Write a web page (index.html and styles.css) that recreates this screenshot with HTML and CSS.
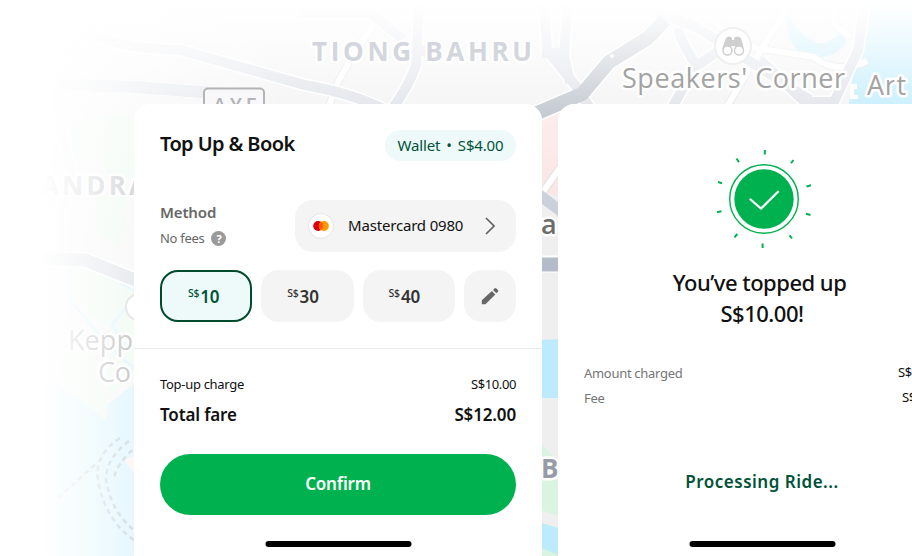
FILE: index.html
```html
<!DOCTYPE html>
<html lang="en">
<head>
<meta charset="utf-8">
<title>Top Up &amp; Book</title>
<link rel="stylesheet" href="styles.css">
</head>
<body>
<div class="stage">
  <svg class="map" width="912" height="556" viewBox="0 0 912 556" aria-hidden="true">
    <defs>
      <linearGradient id="fadeTop" x1="0" y1="0" x2="0" y2="1">
        <stop offset="0" stop-color="#fff"/><stop offset=".06" stop-color="#fff" stop-opacity=".95"/>
        <stop offset=".25" stop-color="#fff" stop-opacity=".7"/><stop offset=".45" stop-color="#fff" stop-opacity=".4"/><stop offset=".7" stop-color="#fff" stop-opacity=".2"/><stop offset="1" stop-color="#fff" stop-opacity="0"/>
      </linearGradient>
      <linearGradient id="fadeLeft" x1="0" y1="0" x2="1" y2="0">
        <stop offset="0" stop-color="#fff"/><stop offset=".14" stop-color="#fff"/>
        <stop offset=".3" stop-color="#fff" stop-opacity=".84"/>
        <stop offset=".47" stop-color="#fff" stop-opacity=".62"/><stop offset="1" stop-color="#fff" stop-opacity="0"/>
      </linearGradient>
    </defs>
    <rect width="912" height="556" fill="#efefef"/>
    <!-- water and parks -->
    <path d="M0 370L50 379L66 389L106 420L108 404L145 375V556H0Z" fill="#bdebfb"/>
    <path d="M55 360L66 389L104 419L107 404L92 350L70 352ZM70 270L90 268L134 289V375L106 399L112 330L72 302ZM97 195H125L127 228L117 248L95 230ZM66 125L128 113L145 140V180L108 178L102 152L76 170Z" fill="#dff5e4"/>
    <path d="M70 268V300L112 350L134 368M134 297L112 325L128 350M120 283L134 291" fill="none" stroke="#bdebfb" stroke-width="3"/>
    <path d="M866 0H912V110H848L853 75L863 48Z" fill="#a8e6fb"/>
    <path d="M787 10C792 28 815 48 826 43L842 33L846 42C835 63 805 60 793 45Q785 30 787 10Z" fill="#a8e6fb"/>
    <path d="M850 84H857V89H854V95H858V99H850Z" fill="#fff"/>
    <path d="M538 340L562 339V398H538ZM538 522L562 529V556H538Z" fill="#bdebfb"/>
    <path d="M538 440L562 466V517L538 509ZM541 548L562 556H541Z" fill="#d9f4e0"/>
    <path d="M538 112L562 109V198L538 190Z" fill="#f9e3e1"/>
    <path d="M125 460L145 450V480L131 470Z" fill="#f9e8e6"/>
    <path d="M120 438Q94 455 98 480Q105 520 134 540M129 441Q106 458 106 480Q112 513 134 530M139 444Q115 464 114 480M58 498L98 462" fill="none" stroke="#8fa8b6" stroke-width="2.500" stroke-dasharray="5 4"/>
    <!-- minor roads -->
    <g fill="none">
      <path d="M373 25Q365 39 357 48L343 73Q335 86 328 110M715 24L755 48L814 57Q834 75 867 61M725 110L752 64M756 58L786 10M832 8L835 25L851 37M540 196L562 165" stroke="#d8dbe0" stroke-width="8"/>
      <path d="M373 25Q365 39 357 48L343 73Q335 86 328 110M715 24L755 48L814 57Q834 75 867 61M725 110L752 64M756 58L786 10M832 8L835 25L851 37M540 196L562 165" stroke="#fff" stroke-width="6"/>
    </g>
    <!-- major roads -->
    <g fill="none" stroke="#fff">
      <path d="M50 84L135 87L240 95M112 8L90 28Q62 50 53 78Q58 120 73 180L60 210V252M90 32Q120 49 180 50Q230 64 305 85Q355 94 385 110" stroke-width="13"/>
      <path d="M0 257L85 260L140 282" stroke-width="16"/>
      <path d="M419 0L416 65Q410 84 393 108M300 13L370 13L403 39M544 0L547 50L575 85L590 108M568 0L564 55L570 83" stroke-width="13"/>
      <path d="M535 114L582 94L609 62L648 38L665 20" stroke-width="17"/>
      <path d="M658 12L698 28L810 100M678 28Q680 40 696 65L672 108M698 65L720 50M760 60L805 102H834L858 50L865 0" stroke-width="13"/>
      <path d="M535 264H565" stroke-width="17"/>
    </g>
    <g fill="none" stroke="#d3d7e0">
      <path d="M50 84L135 87L240 95" stroke-width="12" stroke="#cbd0d9"/>
      <path d="M112 8L90 28Q62 50 53 78Q58 120 73 180L60 210V252" stroke="#e7e8ec" stroke-width="10"/>
      <path d="M90 32Q120 49 180 50Q230 64 305 85Q355 94 385 110" stroke-width="10"/>
      <path d="M419 0L416 65Q410 84 393 108M300 13L370 13L403 39M544 0L547 50L575 85L590 108M568 0L564 55L570 83M416 51H426M542 53H568" stroke-width="10"/>
      <path d="M658 12L698 28L810 100M678 28Q680 40 696 65L672 108M698 65L720 50M760 60L805 102H834L858 50L865 0" stroke-width="10"/>
      <path d="M538 194L562 212" stroke-width="11" stroke="#c5ccd8"/>
      <path d="M0 257L85 260L140 282" stroke-width="13" stroke="#c3c8d2"/>
      <path d="M535 114L582 94L609 62L648 38L665 20" stroke-width="14" stroke="#a4adb9"/>
      <path d="M535 264.500H565" stroke-width="14" stroke="#b5bcc9"/>
    </g>
    <circle cx="612" cy="56" r="2" fill="#fff"/>
    <circle cx="139" cy="307" r="13" fill="#fff" stroke="#bbb" stroke-width="2"/>
    <rect width="912" height="240" fill="url(#fadeTop)"/>
    <g class="map-labels">
      <text class="district faint" x="312" y="61" textLength="220">TIONG BAHRU</text>
      <text class="district" x="41" y="195" textLength="106">ANDRA</text>
      <text class="district" x="541" y="478">B</text>
      <text class="place soft" x="622" y="88" textLength="223">Speakers' Corner</text>
      <text class="place soft" x="867" y="95" textLength="39">Art</text>
      <text class="place" x="68" y="350" textLength="65">Kepp</text>
      <text class="place" x="98" y="382" textLength="33">Co</text>
      <text class="place strong" x="541" y="234">a</text>
    </g>
    <circle cx="733" cy="46" r="18" fill="#fff" stroke="#f0f0f0" stroke-width="2"/>
    <path d="M726 38Q729 35 732 38V40H734V38Q737 35 741 38L744 49H735V46H731V49H722Z" fill="#cfcfcf"/>
    <g fill="#fff" stroke="#cfcfcf" stroke-width="1.500"><circle cx="727.500" cy="50.500" r="4.500"/><circle cx="739" cy="50.500" r="4.500"/></g>
    <rect width="290" height="556" fill="url(#fadeLeft)"/>
    <g class="map-labels">
      <rect x="204" y="88.500" width="60" height="30" rx="4" fill="#f8f8fa" stroke="#b4b4b4" stroke-width="2"/>
      <text class="shield" x="213" y="112" textLength="44">AYE</text>
    </g>
  </svg>

  <main class="cards">
    <section class="card">
      <header class="card-head">
        <h1 class="title">Top Up &amp; Book</h1>
        <span class="wallet"><span>Wallet</span><span>•</span><span>S$4.00</span></span>
      </header>
      <div class="method">
        <div class="method-text">
          <div class="method-name">Method</div>
          <div class="fees"><span>No fees</span><span class="help">?</span></div>
        </div>
        <div class="method-box">
          <svg class="brand" width="26" height="26" viewBox="0 0 26 26"><circle cx="13" cy="13" r="12.500" fill="#fff" stroke="#e4e4e4"/><circle cx="10.200" cy="13" r="5" fill="#d9000d"/><circle cx="15.800" cy="13" r="5" fill="#ff9800"/><path d="M13 8.860A5 5 0 0 1 13 17.140A5 5 0 0 1 13 8.860Z" fill="#ff5a00"/></svg>
          <span class="brand-name">Mastercard 0980</span>
          <svg class="chevron" width="10" height="18" viewBox="0 0 10 18"><path d="M1 1L9 9L1 17" fill="none" stroke="#606060" stroke-width="1.600"/></svg>
        </div>
      </div>
      <div class="chips">
        <div class="chip chip-on"><sup>S$</sup>10</div>
        <div class="chip"><sup>S$</sup>30</div>
        <div class="chip"><sup>S$</sup>40</div>
        <div class="chip chip-edit"><svg width="18" height="18" viewBox="0 0 18 18" fill="#666"><path d="M.8 17.200V13.200L10.900 4.100L14.300 7.400L4.500 17.200Z"/><path d="M12 3L13.700 1.300Q14.500.700 15.300 1.400L17 3Q17.500 3.900 17 4.500L15.400 6.300Z"/></svg></div>
      </div>
      <div class="divider"></div>
      <div class="row"><span class="row-name">Top-up charge</span><span class="row-value">S$10.00</span></div>
      <div class="row total"><span>Total fare</span><span>S$12.00</span></div>
      <div class="confirm">Confirm</div>
      <div class="home-bar"></div>
    </section>

    <section class="card card-done">
      <svg class="success" width="100" height="100" viewBox="0 0 100 100">
        <g fill="none" stroke="#00b14f">
          <circle cx="52" cy="50" r="34.300" stroke-width="1.400"/>
          <path d="M52.800 1V5.500M24.500 9.500L27 13.200M81.500 11L79 14.200M6 33L10 34.300M99 36.200L94.500 37.500M5 63.300L9.500 62.300M98.500 66L94 64.700M22.500 88.300L25.300 85M80 89.500L77.500 86.300M50.600 94.500V99" stroke-width="2"/>
        </g>
        <circle cx="52" cy="50" r="29.700" fill="#00b14f"/>
        <path d="M38.500 50.500L49 59.500L66 42.800" fill="none" stroke="#fff" stroke-width="2.300" stroke-linecap="round"/>
      </svg>
      <h2 class="done-title"><span class="done-line">You’ve topped up</span><span class="done-amount">S$10.00!</span></h2>
      <div class="receipt"><span>Amount charged</span><span class="row-value receipt-value">S$10.00</span></div>
      <div class="receipt"><span>Fee</span><span class="row-value receipt-fee">S$0.00</span></div>
      <div class="processing">Processing Ride...</div>
      <div class="home-bar done-bar"></div>
    </section>
  </main>
</div>
</body>
</html>
```
FILE: styles.css
```css
* { box-sizing: border-box; }
body {
  margin: 0;
  background: #fff;
  color: #111;
  font-family: "Noto Sans", "Open Sans", sans-serif;
}
.stage { position: relative; width: 912px; height: 556px; overflow: hidden; }
.map { position: absolute; inset: 0; display: block; }
.map-labels text { paint-order: stroke; stroke: #fff; stroke-width: 5px; stroke-linejoin: round; }
.map-labels .district { font: 700 26px "Open Sans", "Noto Sans", sans-serif; fill: #969ba6; }
.map-labels .place { font: 400 27px "Open Sans", "Noto Sans", sans-serif; fill: #6c6c6c; }
.map-labels .shield { font: 600 20px "Open Sans", "Noto Sans", sans-serif; fill: #b4b4b4; stroke-width: 0; }
.map-labels .faint { fill: #d3d6dc; }
.map-labels .soft { fill: #a3a3a3; }
.map-labels .strong { font-weight: 600; }

.cards { position: relative; display: flex; gap: 16px; padding: 104px 0 0 134px; }
.card {
  flex: 0 0 408px;
  min-width: 0;
  height: 468px;
  padding: 26px 26px 0;
  border-radius: 16px;
  background: #fff;
}
.card-head { display: flex; align-items: center; justify-content: space-between; height: 31px; }
.title { margin: 0; padding-bottom: 4px; font-size: 20px; font-weight: 600; letter-spacing: -0.6px; white-space: nowrap; }
.wallet {
  display: flex; justify-content: center; gap: 6px;
  width: 131px; height: 31px; border-radius: 16px;
  background: #eef9f9; color: #005339;
  font-size: 15px; line-height: 30px; letter-spacing: -0.15px; white-space: nowrap;
}
.method { display: flex; justify-content: space-between; margin-top: 39px; height: 52px; }
.method-text { color: #676767; }
.method-name { margin-top: 2px; font-size: 15px; line-height: 20px; font-weight: 600; letter-spacing: -0.15px; }
.fees { display: flex; align-items: center; gap: 7px; margin-top: 6px; font-size: 13px; line-height: 20px; letter-spacing: -0.3px; }
.help {
  width: 15px; height: 15px; border-radius: 50%; margin-top: 1px;
  background: #9a9a9a; color: #fff;
  font-size: 11px; line-height: 15px; font-weight: 700; text-align: center;
}
.method-box {
  display: flex; align-items: center;
  width: 221px; padding: 0 21px 0 13px;
  border-radius: 18px; background: #f4f4f4;
}
.brand { margin-right: 14px; }
.brand-name { flex: 1; padding-bottom: 2px; font-size: 15px; letter-spacing: -0.18px; white-space: nowrap; }
.chips { display: flex; gap: 9px; margin-top: 18px; }
.chip {
  display: flex; align-items: center; justify-content: center;
  width: 92.300px; height: 52px; padding: 0 9px 0 0;
  border-radius: 18px; background: #f4f4f4; color: #333;
  font-size: 17px; font-weight: 600; letter-spacing: -0.2px;
}
.chip sup { margin: -6px 1px 0 0; font-size: 10.500px; line-height: 1; font-weight: 500; }
.chip-on { border: 2px solid #004b2d; background: #eef9f9; color: #005339; padding-right: 5px; }
.chip-edit { width: 52px; padding: 0; }
.divider { height: 1px; margin: 26px -26px 0; background: #ebebeb; }
.row { display: flex; justify-content: space-between; margin-top: 25px; font-size: 13px; line-height: 20px; }
.row-name { letter-spacing: -0.3px; }
.row-value { letter-spacing: -0.4px; }
.total { margin-top: 9px; font-size: 17px; line-height: 24px; font-weight: 600; letter-spacing: -0.15px; }
.confirm {
  height: 61px; margin-top: 27px; border-radius: 31px;
  background: #00b14f; color: #fff;
  font-size: 17px; line-height: 60px; font-weight: 600; letter-spacing: -0.2px; text-align: center;
}
.home-bar { width: 146px; height: 6px; margin: 26px auto 0; border-radius: 3px; background: #000; transform: translateX(0.5px); }

.card-done { display: flex; flex-direction: column; padding-top: 45px; }
.success { align-self: center; }
.done-title { display: flex; flex-direction: column; align-items: center; margin: 18px 0 0; padding-right: 5px; font-size: 22px; line-height: 31px; font-weight: 500; letter-spacing: -0.5px; }
.done-amount { padding-left: 5px; }
.receipt { display: flex; justify-content: space-between; margin-top: 5px; color: #757575; font-size: 13px; line-height: 20px; letter-spacing: -0.3px; }
.done-title + .receipt { margin-top: 34px; }
.receipt-value { margin: -1px -3px 0 0; color: #111; }
.receipt-fee { margin: -1px 0 0; color: #111; }
.processing { margin-top: 62px; color: #005339; font-size: 17px; line-height: 24px; font-weight: 600; text-align: center; letter-spacing: 0.5px; }
.done-bar { margin-top: 47px; }
```
